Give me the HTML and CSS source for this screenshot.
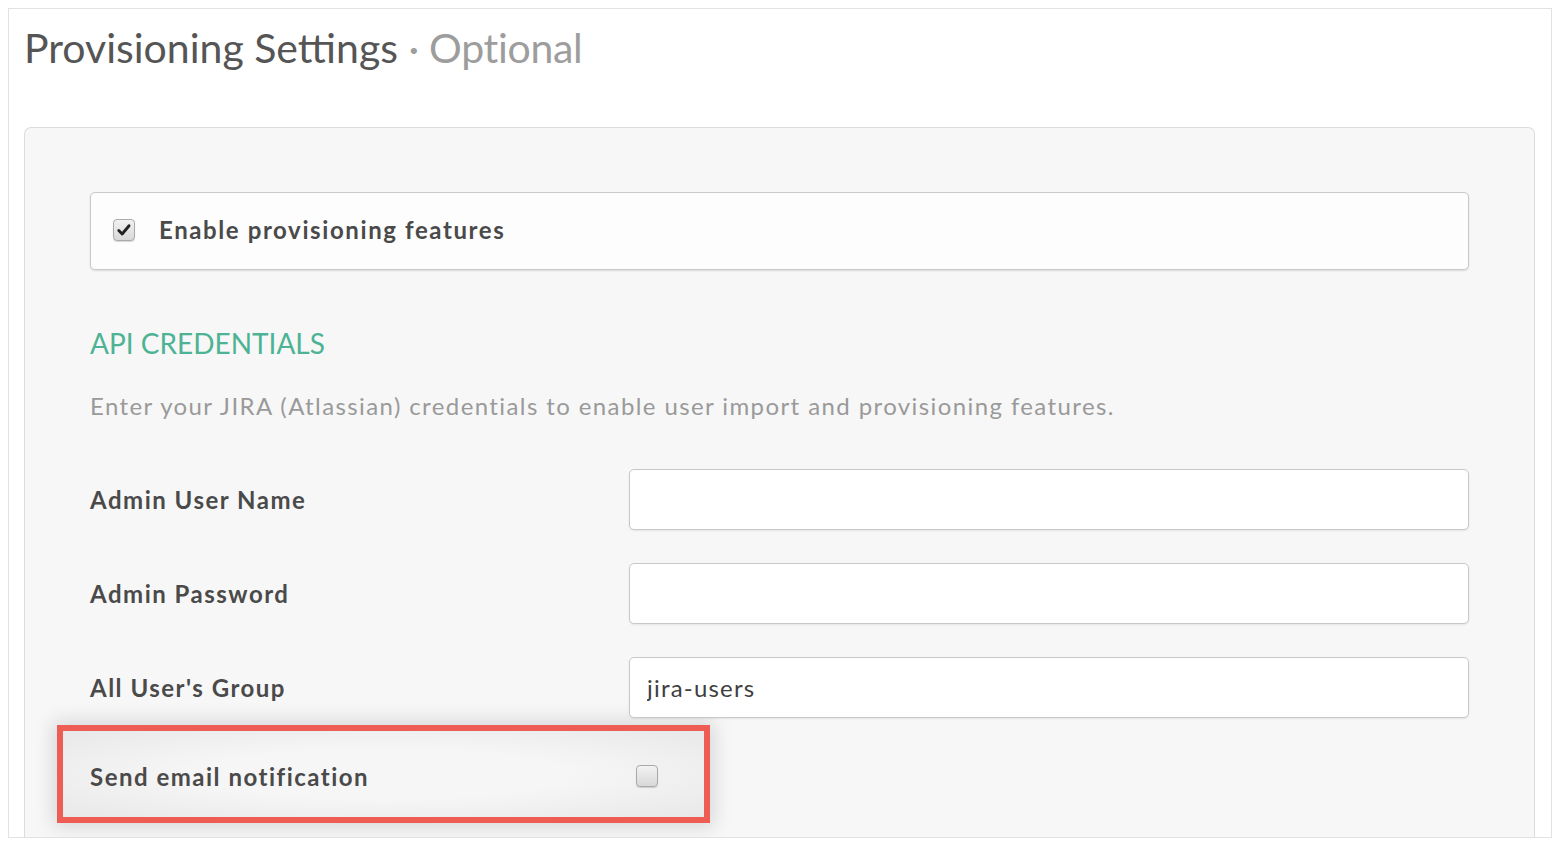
FILE: index.html
```html
<!DOCTYPE html>
<html lang="en">
<head>
<meta charset="utf-8">
<title>Provisioning Settings</title>
<link rel="stylesheet" href="styles.css">
</head>
<body>
<div class="frame">
  <h1 class="title">Provisioning Settings <span class="optional">· Optional</span></h1>
  <div class="panel">
    <div class="enable-box">
      <span class="cb cb-checked">
        <svg width="21" height="22" viewBox="0 0 21 22"><path d="M5 11.5 L8.6 15.2 L15.8 6.5" fill="none" stroke="#222" stroke-width="3" stroke-linecap="round" stroke-linejoin="round"/></svg>
      </span>
      <span class="enable-label">Enable provisioning features</span>
    </div>

    <h2 class="section">API CREDENTIALS</h2>
    <p class="desc">Enter your JIRA (Atlassian) credentials to enable user import and provisioning features.</p>

    <div class="row">
      <label class="label">Admin User Name</label>
      <input class="field" type="text" value="">
    </div>
    <div class="row">
      <label class="label">Admin Password</label>
      <input class="field" type="password" value="">
    </div>
    <div class="row">
      <label class="label">All User's Group</label>
      <input class="field" type="text" value="jira-users">
    </div>

    <div class="highlight">
      <label class="label">Send email notification</label>
      <span class="cb"></span>
    </div>
  </div>
</div>
</body>
</html>
```

FILE: styles.css
```css
* { box-sizing: border-box; }
html, body { margin: 0; padding: 0; background: #fff; }
body {
  font-family: Lato, "Open Sans", "Liberation Sans", sans-serif;
  color: #4a4a4a;
}
.frame {
  margin: 8px 8px 0 8px;
  height: 830px;
  border: 1px solid #e2e2e2;
  display: flex;
  flex-direction: column;
  overflow: hidden;
}
.title {
  margin: 0;
  padding: 14px 0 0 15px;
  height: 118px;
  font-size: 41px;
  font-weight: 400;
  color: #555;
  letter-spacing: 0;
  line-height: 50px;
}
.optional { color: #9d9d9d; letter-spacing: -0.3px; }
.panel {
  flex: 1;
  margin: 0 16px 0 15px;
  background: #f7f7f7;
  border: 1px solid #dcdcdc;
  border-bottom: none;
  border-radius: 7px 7px 0 0;
  padding: 64px 65px 0 65px;
}
.enable-box {
  height: 78px;
  background: #fdfdfd;
  border: 1px solid #c9c9c9;
  border-radius: 5px;
  box-shadow: 0 1px 2px rgba(0,0,0,0.12);
  display: flex;
  align-items: center;
  padding-left: 22px;
  padding-bottom: 3px;
}
.cb {
  width: 22px;
  height: 22px;
  border: 1px solid #a9a9a9;
  border-radius: 4px;
  background: linear-gradient(#f2f2f2, #d8d8d8);
  box-shadow: 0 1px 1px rgba(0,0,0,0.15);
  display: inline-flex;
  align-items: center;
  justify-content: center;
  flex: none;
}
.cb svg { display: block; }
.enable-label {
  margin-left: 24px;
  font-size: 24px;
  font-weight: 700;
  letter-spacing: 1.6px;
  color: #4a4a4a;
}
.section {
  margin: 55px 0 0 0;
  font-size: 28px;
  font-weight: 400;
  color: #4db394;
  line-height: 36px;
}
.desc {
  margin: 30px 0 0 0;
  font-size: 24px;
  letter-spacing: 1.4px;
  color: #9a9a9a;
  line-height: 30px;
}
.row {
  display: flex;
  align-items: center;
  margin-top: 33px;
}
.desc + .row { margin-top: 48px; }
.label {
  width: 539px;
  flex: none;
  font-size: 24px;
  font-weight: 700;
  letter-spacing: 1.5px;
  color: #4a4a4a;
}
.field {
  flex: 1;
  height: 61px;
  border: 1px solid #c8c8c8;
  border-radius: 5px;
  background: #fff;
  box-shadow: 0 1px 2px rgba(0,0,0,0.08);
  font-family: inherit;
  font-size: 24px;
  letter-spacing: 1.2px;
  color: #3f3f3f;
  padding: 0 17px;
  outline: none;
}
.highlight {
  margin: 7px 0 0 -33px;
  width: 653px;
  height: 98px;
  border: 6px solid #ee5d53;
  background: radial-gradient(ellipse at center, #f6f6f6 40%, #e8e8e8 100%);
  box-shadow: 0 0 18px 4px rgba(0,0,0,0.13);
  display: flex;
  align-items: center;
  padding-left: 27px;
  padding-top: 4px;
}
.highlight .label { width: 546px; }
```
